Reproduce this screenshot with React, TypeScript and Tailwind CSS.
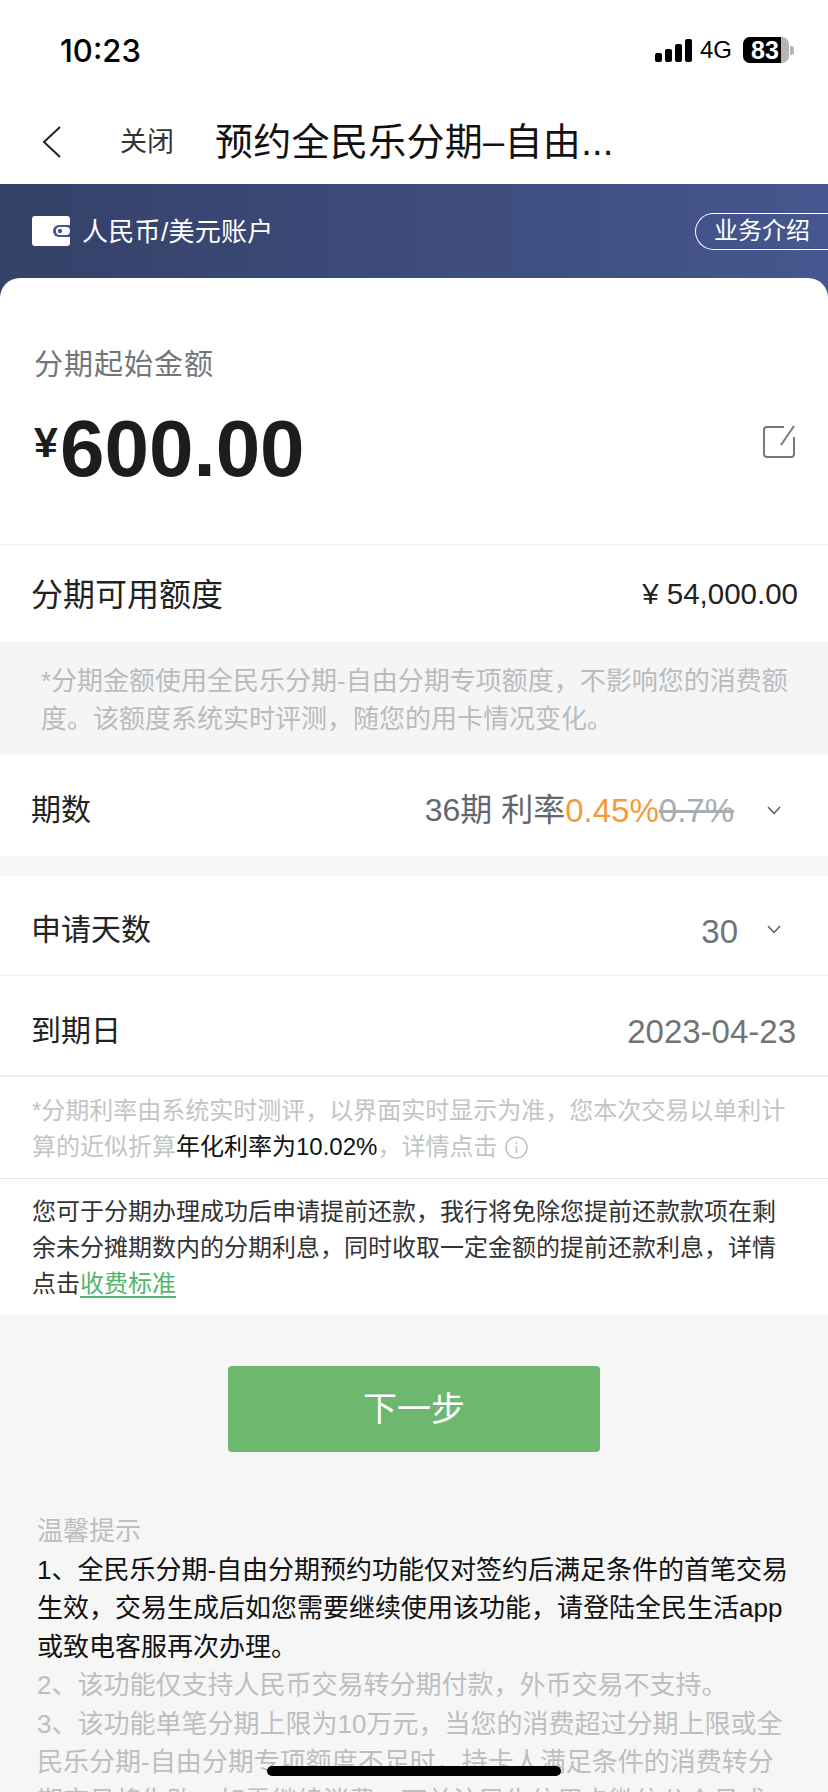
function StatusBar() {
  return (
    <div className="h-[100px] flex items-center justify-between pl-[60px] pr-[34px]">
      <span className="font-['Inter',sans-serif] text-[31px] leading-none font-medium text-black">10:23</span>
      <div className="flex items-center">
        <div className="flex items-end gap-[3px] h-[23px] mr-[8px]">
          <div className="w-[7px] h-[9px] bg-black rounded-[2px]" />
          <div className="w-[7px] h-[13px] bg-black rounded-[2px]" />
          <div className="w-[7px] h-[18px] bg-black rounded-[2px]" />
          <div className="w-[7px] h-[23px] bg-black rounded-[2px]" />
        </div>
        <span className="text-[24px] leading-none text-black mr-[11px]">4G</span>
        <div className="relative w-[46px] h-[26px] rounded-[7px] overflow-hidden bg-[#b5b5b5] flex">
          <div className="w-[38px] h-full bg-black flex items-center justify-center pl-[6px]">
            <span className="text-[25px] leading-none font-bold text-white">83</span>
          </div>
        </div>
        <div className="w-[4px] h-[9px] bg-[#b5b5b5] ml-[1px] rounded-r-[3px]" />
      </div>
    </div>
  );
}

function Chevron() {
  return (
    <svg width="14" height="9" viewBox="0 0 14 9" fill="none" stroke="#555" strokeWidth="1.3">
      <path d="M1 1l6 6.5L13 1" />
    </svg>
  );
}

function SelectRow({ label, children, border, tall }: { label: string; children: React.ReactNode; border?: boolean; tall?: boolean }) {
  return (
    <div className={`${tall ? 'h-[101px]' : 'h-[100px]'} bg-white flex items-center justify-between pl-[31px] pr-[31px] ${border ? 'border-b border-[#eeeeee]' : ''}`}>
      <span className="text-[30px] text-[#222222] leading-none pt-[8px]">{label}</span>
      {children}
    </div>
  );
}

export default function App() {
  return (
    <div className="relative w-[828px] h-[1792px] overflow-hidden bg-[#f6f6f6] font-['Liberation_Sans','Noto_Sans_CJK_SC',sans-serif]">
      <div className="bg-white">
        <StatusBar />
        {/* Nav */}
        <div className="h-[84px] flex items-center pl-[42px]">
          <svg width="20" height="32" viewBox="0 0 20 32" fill="none" stroke="#222" strokeWidth="2">
            <path d="M18 1L2 16l16 15" />
          </svg>
          <span className="ml-[58px] text-[27px] text-[#333333] leading-none">关闭</span>
          <span className="ml-[41px] text-[38px] text-[#111111] leading-none tracking-[0.3px]">预约全民乐分期–自由...</span>
        </div>
      </div>

      {/* Account bar */}
      <div className="h-[114px] bg-gradient-to-r from-[#344168] to-[#46578f]">
        <div className="h-[94px] flex items-center justify-between pl-[32px]">
          <div className="flex items-center">
            <svg width="38" height="30" viewBox="0 0 38 30">
              <rect width="38" height="30" rx="3" fill="#ffffff" />
              <path d="M38 9H27a6 6 0 0 0 0 12h11z" fill="#46578f" />
              <rect x="24" y="11" width="14" height="8" rx="4" fill="#ffffff" />
              <circle cx="28" cy="15" r="2.2" fill="#46578f" />
            </svg>
            <span className="ml-[12px] text-[26px] text-white leading-none pt-[2px] tracking-[0.3px]">人民币/美元账户</span>
          </div>
          <div className="w-[133px] h-[37px] border border-r-0 border-white rounded-l-[19px] flex items-center pl-[18px]">
            <span className="text-[24px] text-white leading-none">业务介绍</span>
          </div>
        </div>
      </div>

      {/* Amount card */}
      <div className="relative -mt-[20px] bg-white rounded-t-[20px] pt-[67px] pb-[50px] pl-[34px] pr-[33px] border-b border-[#eeeeee]">
        <div className="text-[29px] leading-[40px] text-[#72767b] tracking-[1px]">分期起始金额</div>
        <div className="mt-[19px] h-[90px] flex items-center justify-between">
          <div className="flex items-start">
            <span className="text-[43px] leading-[76px] font-bold text-[#1d1d1d]">¥</span>
            <span className="text-[80px] leading-[90px] font-bold text-[#1d1d1d] ml-[2px]">600.00</span>
          </div>
          <svg className="-mt-[16px]" width="32" height="33" viewBox="0 0 32 33" fill="none" stroke="#77797c" strokeWidth="2">
            <path d="M21 2H4a3 3 0 0 0-3 3v24a3 3 0 0 0 3 3h24a3 3 0 0 0 3-3V12" />
            <path d="M31 1L18 20" />
          </svg>
        </div>
      </div>

      {/* Available limit */}
      <div className="h-[97px] bg-white flex items-center justify-between pl-[31px] pr-[30px]">
        <span className="text-[32px] text-[#222222] leading-none pt-[3px]">分期可用额度</span>
        <span className="text-[29.5px] text-[#222222] leading-none pt-[1px]">¥ 54,000.00</span>
      </div>

      {/* Limit note */}
      <div className="h-[113px] bg-[#f5f5f5] pl-[41px] pr-[32px] pt-[20px] text-[26px] leading-[38px] text-[#b9bbbd]">
        *分期金额使用全民乐分期-自由分期专项额度，不影响您的消费额度。该额度系统实时评测，随您的用卡情况变化。
      </div>

      <SelectRow label="期数" tall>
        <div className="flex items-center pt-[9px]">
          <span className="text-[32px] leading-none text-[#63676c]">36期 利率</span>
          <span className="text-[33px] leading-none text-[#f59a38]">0.45%</span>
          <span className="text-[33px] leading-none text-[#a9acb0] line-through">0.7%</span>
          <div className="ml-[33px] mr-[16px] flex"><Chevron /></div>
        </div>
      </SelectRow>

      <div className="h-[20px]" />

      <SelectRow label="申请天数" border>
        <div className="flex items-center pt-[11px]">
          <span className="text-[33px] leading-none text-[#707478]">30</span>
          <div className="ml-[29px] mr-[16px] flex -mt-[3px]"><Chevron /></div>
        </div>
      </SelectRow>

      <div className="h-[101px] bg-white flex items-center justify-between pl-[31px] pr-[32px] border-b-2 border-[#eeeeee]">
        <span className="text-[30px] text-[#222222] leading-none pt-[10px]">到期日</span>
        <span className="text-[33px] text-[#707478] leading-none pt-[11px]">2023-04-23</span>
      </div>

      {/* Rate note */}
      <div className="bg-white pl-[32px] pr-[40px] pt-[16px] pb-[13px] text-[24px] leading-[36px] text-[#c2c4c6] border-b border-[#e8e8e8]">
        *分期利率由系统实时测评，以界面实时显示为准，您本次交易以单利计算的近似折算<span className="text-[#111111]">年化利率为10.02%</span>，详情点击
        <svg className="inline-block ml-[8px] align-[-4px]" width="23" height="23" viewBox="0 0 23 23" fill="none" stroke="#bfc1c3" strokeWidth="1.5">
          <circle cx="11.5" cy="11.5" r="10.5" />
          <path d="M11.5 10v7M11.5 6v2" />
        </svg>
      </div>

      <div className="h-[136px] bg-white pl-[32px] pr-[40px] pt-[15px] text-[24px] leading-[36px] text-[#333333]">
        您可于分期办理成功后申请提前还款，我行将免除您提前还款款项在剩余未分摊期数内的分期利息，同时收取一定金额的提前还款利息，详情点击<span className="text-[#55b46c] underline underline-offset-4">收费标准</span>
      </div>

      {/* Action */}
      <div className="pt-[51px] flex justify-center">
        <button className="w-[372px] h-[86px] rounded-[4px] bg-[#6db76f] text-[34px] text-white">下一步</button>
      </div>

      {/* Tips */}
      <div className="mt-[60px] pl-[37px] pr-[37px] text-[26px] leading-[38.5px] text-[#bcbec0]">
        <div>温馨提示</div>
        <div className="text-[#111111]">1、全民乐分期-自由分期预约功能仅对签约后满足条件的首笔交易生效，交易生成后如您需要继续使用该功能，请登陆全民生活app或致电客服再次办理。</div>
        <div>2、该功能仅支持人民币交易转分期付款，外币交易不支持。</div>
        <div>3、该功能单笔分期上限为10万元，当您的消费超过分期上限或全民乐分期-自由分期专项额度不足时，持卡人满足条件的消费转分期交易将失败，如需继续消费，可关注民生信用卡微信公众号或</div>
      </div>

      {/* Home indicator */}
      <div className="absolute left-[267px] top-[1766px] w-[294px] h-[10px] rounded-full bg-black" />
    </div>
  );
}
